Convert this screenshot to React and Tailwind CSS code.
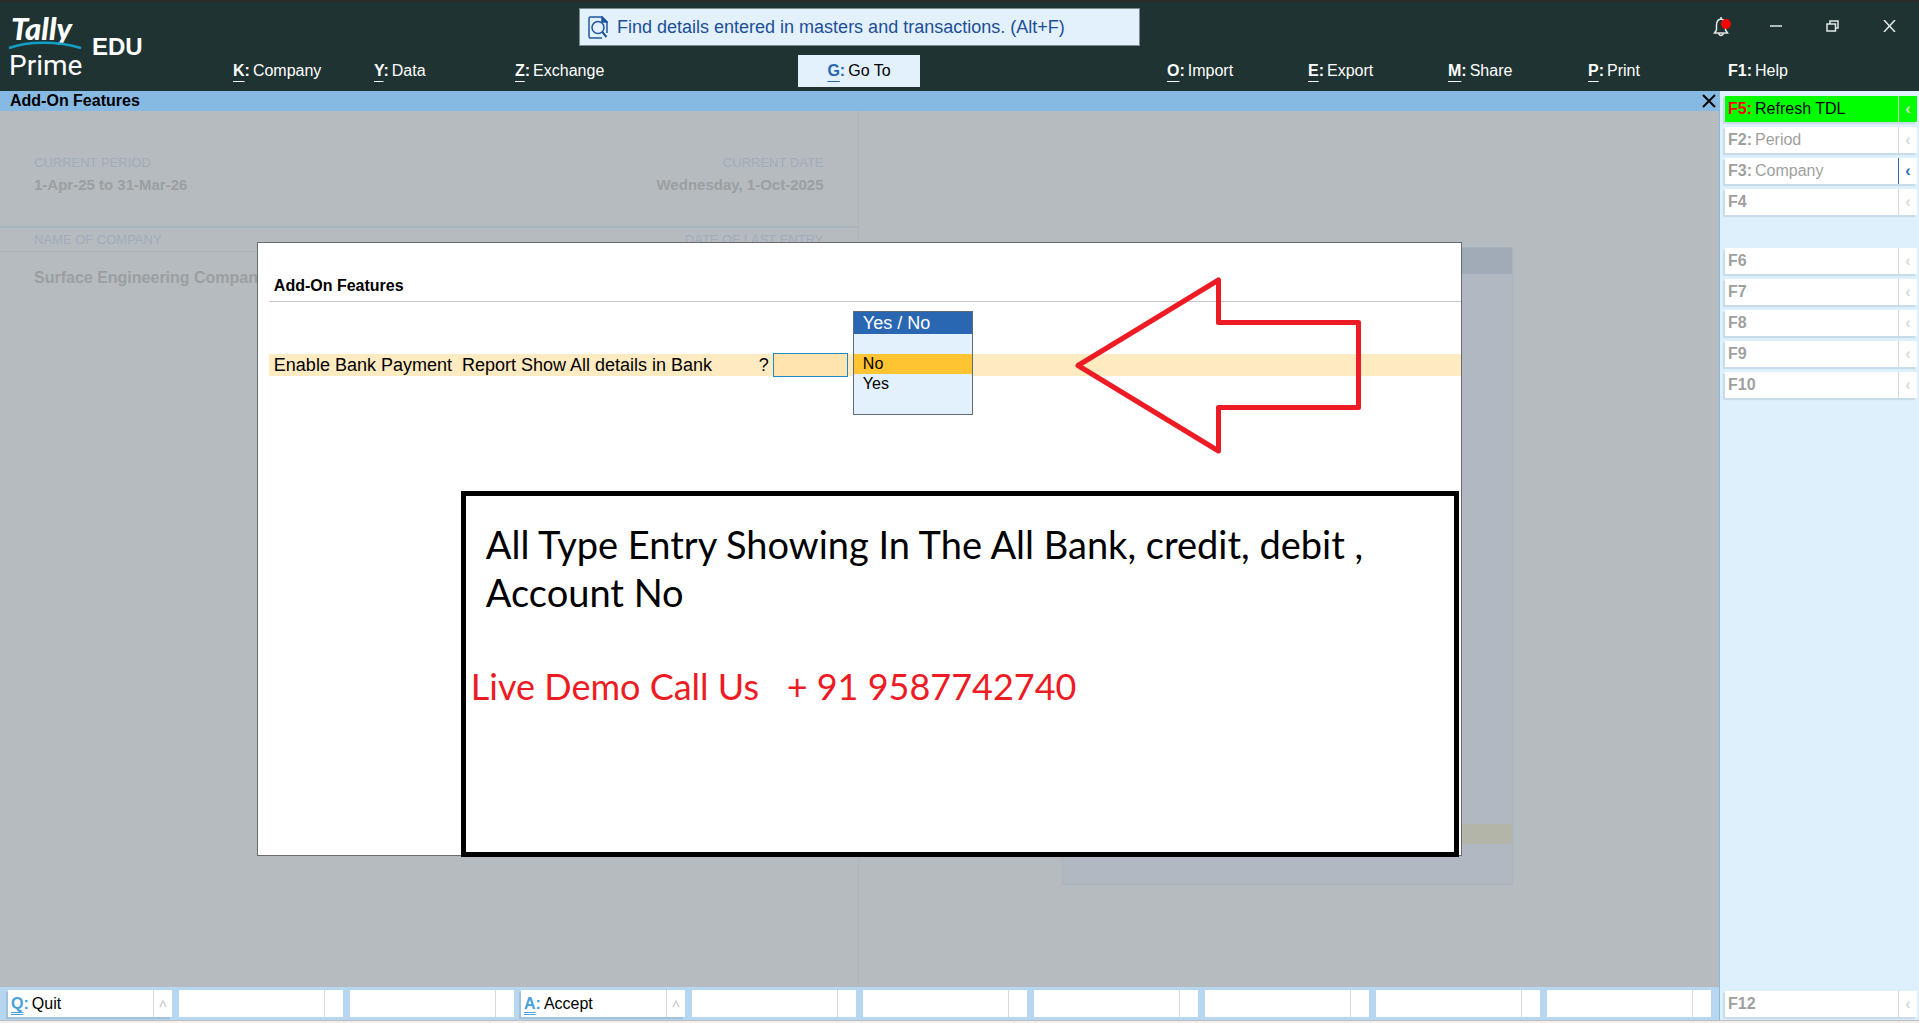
import React, { useState } from "react";

const menuItems = [
  { hotkey: "K", label: "Company" },
  { hotkey: "Y", label: "Data" },
  { hotkey: "Z", label: "Exchange" },
  { hotkey: "G", label: "Go To", active: true },
  { hotkey: "O", label: "Import", startsGroup: true },
  { hotkey: "E", label: "Export" },
  { hotkey: "M", label: "Share" },
  { hotkey: "P", label: "Print" },
  { hotkey: "F1", label: "Help", plain: true },
];

const sideTop = [
  { hotkey: "F5", label: "Refresh TDL", highlight: true },
  { hotkey: "F2", label: "Period" },
  { hotkey: "F3", label: "Company", more: true },
  { hotkey: "F4" },
];

const sideMiddle = [
  { hotkey: "F6" },
  { hotkey: "F7" },
  { hotkey: "F8" },
  { hotkey: "F9" },
  { hotkey: "F10" },
];

const footerItems = [
  { hotkey: "Q", label: "Quit" },
  {},
  {},
  { hotkey: "A", label: "Accept" },
  {},
  {},
  {},
  {},
  {},
  {},
];

function Logo() {
  return (
    <svg width="80" height="72" viewBox="0 0 80 72" role="img" aria-label="Tally Prime">
      <text
        x="3"
        y="30"
        fill="#fff"
        fontFamily="Lato, sans-serif"
        fontSize="31"
        fontWeight="900"
        fontStyle="italic"
      >
        Tally
      </text>
      <path d="M1 38C20 31 50 31 73 38" fill="none" stroke="#129fc6" strokeWidth="2.5" />
      <text x="1" y="65" fill="#fff" fontFamily="Roboto, sans-serif" fontSize="28">
        Prime
      </text>
    </svg>
  );
}

function SearchIcon() {
  return (
    <svg width="20" height="23" viewBox="0 0 20 23" fill="none" stroke="#1c55a0" strokeWidth="1.5">
      <path d="M14 22H2.5Q1 22 1 20.5V2.5Q1 1 2.5 1H14L19 6V17" />
      <path d="M14 1V6H19Z" fill="#1c55a0" />
      <circle cx="10" cy="11.5" r="6" />
      <path d="M14.3 16L18.5 21" strokeWidth="2" />
    </svg>
  );
}

function BellIcon() {
  return (
    <svg width="18" height="21" viewBox="0 0 18 21" fill="none" stroke="#e3e8e8" strokeWidth="1.5">
      <path d="M8 3C5 3.5 3.5 6 3.5 9V14L1.5 17H14.5L12.5 14V9C12.5 6 11 3.5 8 3Z" />
      <path d="M8 1V3M5.5 17.5Q8 21.5 10.5 17.5" />
      <circle cx="13" cy="8" r="5" fill="#f00" stroke="none" />
    </svg>
  );
}

function MenuItem({ item }) {
  const { hotkey, label, active, plain, startsGroup } = item;
  return (
    <button
      className={`flex h-8 items-center gap-[3px] text-base ${
        active ? "justify-center bg-[#e3f1fc] text-black" : "text-white"
      } ${startsGroup ? "col-start-6" : ""}`}
    >
      <b className={active ? "text-[#2a67b2]" : ""}>
        <span
          className={
            plain ? "" : "underline decoration-1 underline-offset-[5px] [text-decoration-skip-ink:none]"
          }
        >
          {hotkey}
        </span>
        :
      </b>
      {label}
    </button>
  );
}

function Header() {
  return (
    <header className="grid grid-cols-[233fr_346fr_561fr_579fr_200px] gap-y-[9px] border-t-2 border-[#2a2a2a] bg-[#1f3332] pt-1.5 pb-1">
      <div className="row-span-2 flex items-start gap-1 pt-0.5 pl-2">
        <Logo />
        <span className="pt-[23px] text-2xl leading-7 font-bold text-white">EDU</span>
      </div>
      <label className="col-start-3 flex h-[38px] items-center gap-[9px] border border-[#7d8a8c] bg-[#e3f1fc] pl-2">
        <SearchIcon />
        <input
          type="text"
          aria-label="Find details"
          placeholder="Find details entered in masters and transactions. (Alt+F)"
          className="h-7 flex-1 bg-transparent text-lg text-[#1c4f97] outline-none placeholder:text-[#1c4f97]"
        />
      </label>
      <div className="col-span-2 flex items-center justify-end gap-[39px] pr-[23px] pb-0.5">
        <button aria-label="Notifications">
          <BellIcon />
        </button>
        <div className="flex gap-[44px]">
          <button aria-label="Minimize">
            <svg width="12" height="12" viewBox="0 0 12 12">
              <path d="M0 6H12" stroke="#e3e8e8" strokeWidth="1.5" />
            </svg>
          </button>
          <button aria-label="Restore">
            <svg width="13" height="12" viewBox="0 0 13 12" fill="none" stroke="#e3e8e8" strokeWidth="1.5">
              <path d="M1 4H9.5V11H1ZM4 4V1H12V8H9.5" />
            </svg>
          </button>
          <button aria-label="Close window">
            <svg width="13" height="12" viewBox="0 0 13 12" stroke="#e3e8e8" strokeWidth="1.5">
              <path d="M1 0L12 12M12 0L1 12" />
            </svg>
          </button>
        </div>
      </div>
      <nav className="col-span-4 col-start-2 grid grid-cols-[141fr_141fr_283fr_122fr_247fr_141fr_140fr_140fr_140fr_191px]">
        {menuItems.map((item) => (
          <MenuItem key={item.hotkey} item={item} />
        ))}
      </nav>
    </header>
  );
}

// Greyed out company screen behind the dialog
function Gateway() {
  return (
    <div className="flex flex-1">
      <section className="flex-1 border-r border-[#b0b5ba]">
        <div className="flex justify-between border-b-2 border-[#a8b5bd] px-[34px] pt-10 pb-[31px]">
          <div>
            <p className="text-[13px] leading-6 text-[#a1adbb]">CURRENT PERIOD</p>
            <p className="text-[15px] leading-5 font-bold text-[#9b9fa2]">1-Apr-25 to 31-Mar-26</p>
          </div>
          <div className="text-right">
            <p className="text-[13px] leading-6 text-[#a1adbb]">CURRENT DATE</p>
            <p className="text-[15px] leading-5 font-bold text-[#9b9fa2]">Wednesday, 1-Oct-2025</p>
          </div>
        </div>
        <div className="flex h-6 justify-between border-b border-[#a9b3bb] px-[34px] text-[13px] leading-6 text-[#a1adbb]">
          <span>NAME OF COMPANY</span>
          <span>DATE OF LAST ENTRY</span>
        </div>
        <p className="px-[34px] pt-3.5 text-base font-bold text-[#9b9fa2]">Surface Engineering Company</p>
      </section>
      <section className="flex flex-1 justify-center pt-[136px] pr-[3px] pb-[102px]">
        <div className="flex w-[451px] flex-col border border-[#a9b5be] bg-[#b1b8c1]">
          <div className="h-[26px] bg-[#a0abb7]" />
          <div className="mt-auto mb-10 h-5 bg-[#b3b5a9]" />
        </div>
      </section>
    </div>
  );
}

function YesNoList({ value, onSelect }) {
  return (
    <div className="absolute -top-[42px] left-[80px] w-[120px] border border-[#5e6a75] bg-[#e3f1fc] pb-5">
      <p className="mb-5 bg-[#2a67b2] pl-[9px] text-lg leading-[22px] text-white">Yes / No</p>
      {["No", "Yes"].map((option) => (
        <button
          key={option}
          onClick={() => onSelect(option)}
          className={`block h-5 w-full pl-[9px] text-left text-base leading-5 ${
            option === value ? "bg-[#ffc431]" : ""
          }`}
        >
          {option}
        </button>
      ))}
    </div>
  );
}

function AddOnDialog() {
  const [option, setOption] = useState("No");

  return (
    <div
      role="dialog"
      aria-label="Add-On Features"
      className="absolute inset-x-[calc(15%-1px)] inset-y-[15%] flex flex-col border border-[#696c6f] bg-white pt-[31px] pl-[11px]"
    >
      <h2 className="border-b border-[#c8c8c8] pb-[3px] pl-[5px] text-base font-bold">Add-On Features</h2>

      <div className="mt-[52px] flex h-[22px] items-center bg-[#feebc1] pl-[5px] text-lg">
        <label htmlFor="bankReport" className="flex w-[499px] justify-between pr-1 whitespace-pre">
          <span>Enable Bank Payment  Report Show All details in Bank</span>
          <span>?</span>
        </label>
        <div className="relative">
          <input
            id="bankReport"
            type="text"
            className="block h-6 w-[75px] border border-[#1a8bc4] bg-[#ffe4b0] outline-none"
          />
          <YesNoList value={option} onSelect={setOption} />
        </div>
      </div>

      {/* Note */}
      <div className="mt-[115px] mr-0.5 -mb-0.5 ml-[192px] flex-1 border-[5px] border-black pt-6 font-[Comic_Sans_MS,Lato,sans-serif]">
        <p className="pl-5 text-[38px] leading-[48px]">
          All Type Entry Showing In The All Bank, credit, debit ,<br />
          Account No
        </p>
        <p className="mt-[46px] pl-[5px] text-4xl leading-[48px] whitespace-pre text-[#ed1c24]">
          Live Demo Call Us   + 91 9587742740
        </p>
      </div>

      <svg
        className="absolute top-[33px] left-[815px]"
        width="290"
        height="178"
        viewBox="0 0 290 178"
        fill="none"
        stroke="#ed1c24"
        strokeWidth="5"
        strokeLinejoin="round"
      >
        <path d="M5 89.5L145.500 4V46.500H285.500V131.500H145.500V175Z" />
      </svg>
    </div>
  );
}

function SideButton({ item }) {
  const { hotkey, label, highlight, more } = item;
  return (
    <button
      className={`flex h-[26px] w-full text-base leading-[26px] shadow-[-2px_2px_1px_#c9dcea] ${
        highlight ? "bg-[#00ff00] text-black" : "bg-white text-[#9f9f9f]"
      }`}
    >
      <span className="flex flex-1 gap-[3px] pl-[3px]">
        <b className={highlight ? "text-[#ff0000]" : ""}>{label ? `${hotkey}:` : hotkey}</b>
        {label}
      </span>
      <span
        className={`h-full w-[19px] border-l font-bold leading-[26px] ${
          more ? "border-[#2a67b2] text-[#2a67b2]" : "border-[#d9d9d9] text-[#d9d9d9]"
        }`}
      >
        ‹
      </span>
    </button>
  );
}

function Sidebar() {
  return (
    <aside className="flex w-[200px] shrink-0 flex-col border-l border-[#87bae3] bg-[#dff0fd] pt-[5px] pr-0.5 pb-[3px] pl-[5px]">
      <div className="flex flex-col gap-[5px]">
        {sideTop.map((item) => (
          <SideButton key={item.hotkey} item={item} />
        ))}
      </div>
      <div className="mt-[33px] flex flex-col gap-[5px]">
        {sideMiddle.map((item) => (
          <SideButton key={item.hotkey} item={item} />
        ))}
      </div>
      <div className="mt-auto">
        <SideButton item={{ hotkey: "F12" }} />
      </div>
    </aside>
  );
}

function FooterBar() {
  return (
    <footer className="grid grid-cols-10 gap-[7px] bg-[#b7d7f1] px-2 py-[3px]">
      {footerItems.map((item, i) => (
        <button
          key={i}
          disabled={!item.label}
          className={`flex h-[27px] bg-white text-base leading-7 ${
            item.label ? "shadow-[-2px_2px_1px_#a3c3dc]" : ""
          }`}
        >
          <span className="flex flex-1 gap-[3px] pl-[3px]">
            {item.label && (
              <>
                <b className="text-[#479fdb]">
                  <span className="underline decoration-double decoration-1 underline-offset-[3px] [text-decoration-skip-ink:none]">
                    {item.hotkey}
                  </span>
                  :
                </b>
                {item.label}
              </>
            )}
          </span>
          <span className="flex h-full w-[19px] items-center justify-center border-l border-[#d9d9d9]">
            {item.label && (
              <svg width="8" height="8" viewBox="0 0 8 8" fill="none" stroke="#cfcfcf" strokeWidth="1.5">
                <path d="M1 7L4 1L7 7" />
              </svg>
            )}
          </span>
        </button>
      ))}
    </footer>
  );
}

export default function App() {
  return (
    <div className="flex min-h-screen flex-col bg-[#f0f0f0] font-[Liberation_Sans,Arial,sans-serif] text-black">
      <Header />
      <div className="flex flex-1 border-b border-[#bdbdbd]">
        <main className="flex flex-1 flex-col">
          <div className="flex h-5 items-center justify-between bg-[#87bae3] pr-[3px] pl-2.5">
            <h1 className="text-base leading-5 font-bold">Add-On Features</h1>
            <button aria-label="Close">
              <svg width="14" height="14" viewBox="0 0 14 14" stroke="#000" strokeWidth="2">
                <path d="M1 1L13 13M13 1L1 13" />
              </svg>
            </button>
          </div>
          <div className="relative flex flex-1 flex-col bg-[#b6bbbf]">
            <Gateway />
            <AddOnDialog />
          </div>
          <FooterBar />
        </main>
        <Sidebar />
      </div>
      <div className="h-0.5" />
    </div>
  );
}
